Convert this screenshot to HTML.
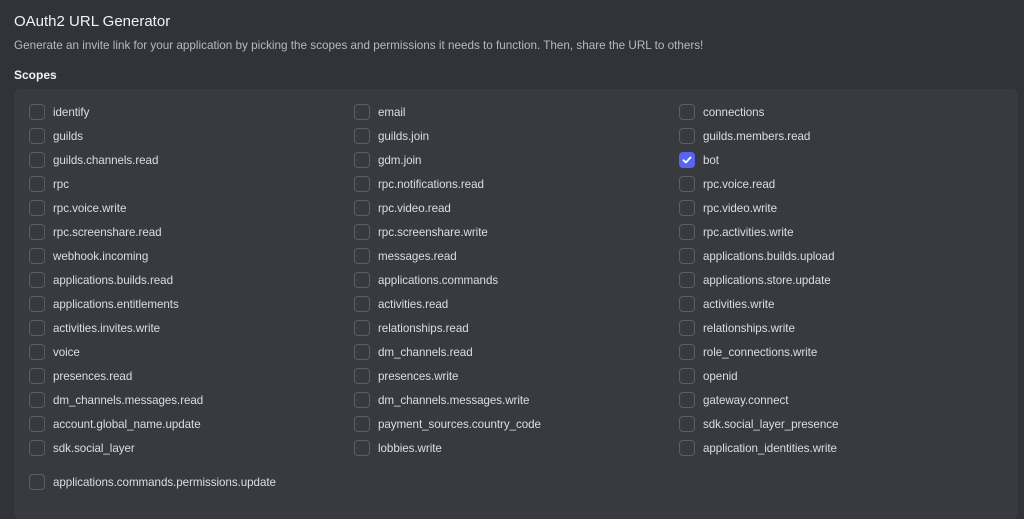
<!DOCTYPE html>
<html><head><meta charset="utf-8"><style>
body{margin:0;width:1024px;height:510px;background:#313338;font-family:"Liberation Sans",sans-serif;overflow:hidden;position:relative;color:#dbdee1}
h1{position:absolute;left:14px;top:13px;margin:0;font-size:15px;font-weight:normal;color:#f2f3f5}
.d{position:absolute;left:14px;top:39px;font-size:11.7px;color:#b5bac1}
.s{position:absolute;left:14px;top:68px;font-size:12px;font-weight:bold;color:#f2f3f5}
.p{position:absolute;left:14px;top:89px;width:1004px;height:430px;background:#383a40;border-radius:6px}
.i{position:absolute;height:16px;font-size:11.6px;letter-spacing:-0.05px;line-height:17px;color:#dbdee1}
.i b{position:absolute;left:0;top:0;width:14px;height:14px;border:1px solid #5b5e66;border-radius:4px}
.i span{position:absolute;left:24px;top:0;white-space:nowrap}
.i b.c{background:#5865f2;border-color:#5865f2}
</style></head><body>
<h1>OAuth2 URL Generator</h1>
<div class="d">Generate an invite link for your application by picking the scopes and permissions it needs to function. Then, share the URL to others!</div>
<div class="s">Scopes</div>
<div class="p"></div>
<div id="g"></div>
<script>
var cols=[["identify","guilds","guilds.channels.read","rpc","rpc.voice.write","rpc.screenshare.read","webhook.incoming","applications.builds.read","applications.entitlements","activities.invites.write","voice","presences.read","dm_channels.messages.read","account.global_name.update","sdk.social_layer"],
["email","guilds.join","gdm.join","rpc.notifications.read","rpc.video.read","rpc.screenshare.write","messages.read","applications.commands","activities.read","relationships.read","dm_channels.read","presences.write","dm_channels.messages.write","payment_sources.country_code","lobbies.write"],
["connections","guilds.members.read","bot","rpc.voice.read","rpc.video.write","rpc.activities.write","applications.builds.upload","applications.store.update","activities.write","relationships.write","role_connections.write","openid","gateway.connect","sdk.social_layer_presence","application_identities.write"]];
var xs=[29,354,679],h="";
cols.forEach(function(c,ci){c.forEach(function(t,r){h+='<div class="i" style="left:'+xs[ci]+'px;top:'+(104+r*24)+'px"><b'+(t=="bot"?' class="c"':'')+'>'+(t=="bot"?'<svg width="14" height="14" viewBox="0 0 14 14" style="position:absolute;left:0;top:0"><path d="M3.5 7.2l2.4 2.3 4.6-5" fill="none" stroke="#fff" stroke-width="1.8" stroke-linecap="round" stroke-linejoin="round"/></svg>':'')+'</b><span>'+t+'</span></div>';});});
h+='<div class="i" style="left:29px;top:474px"><b></b><span>applications.commands.permissions.update</span></div>';
document.getElementById("g").innerHTML=h;
</script>
</body></html>
